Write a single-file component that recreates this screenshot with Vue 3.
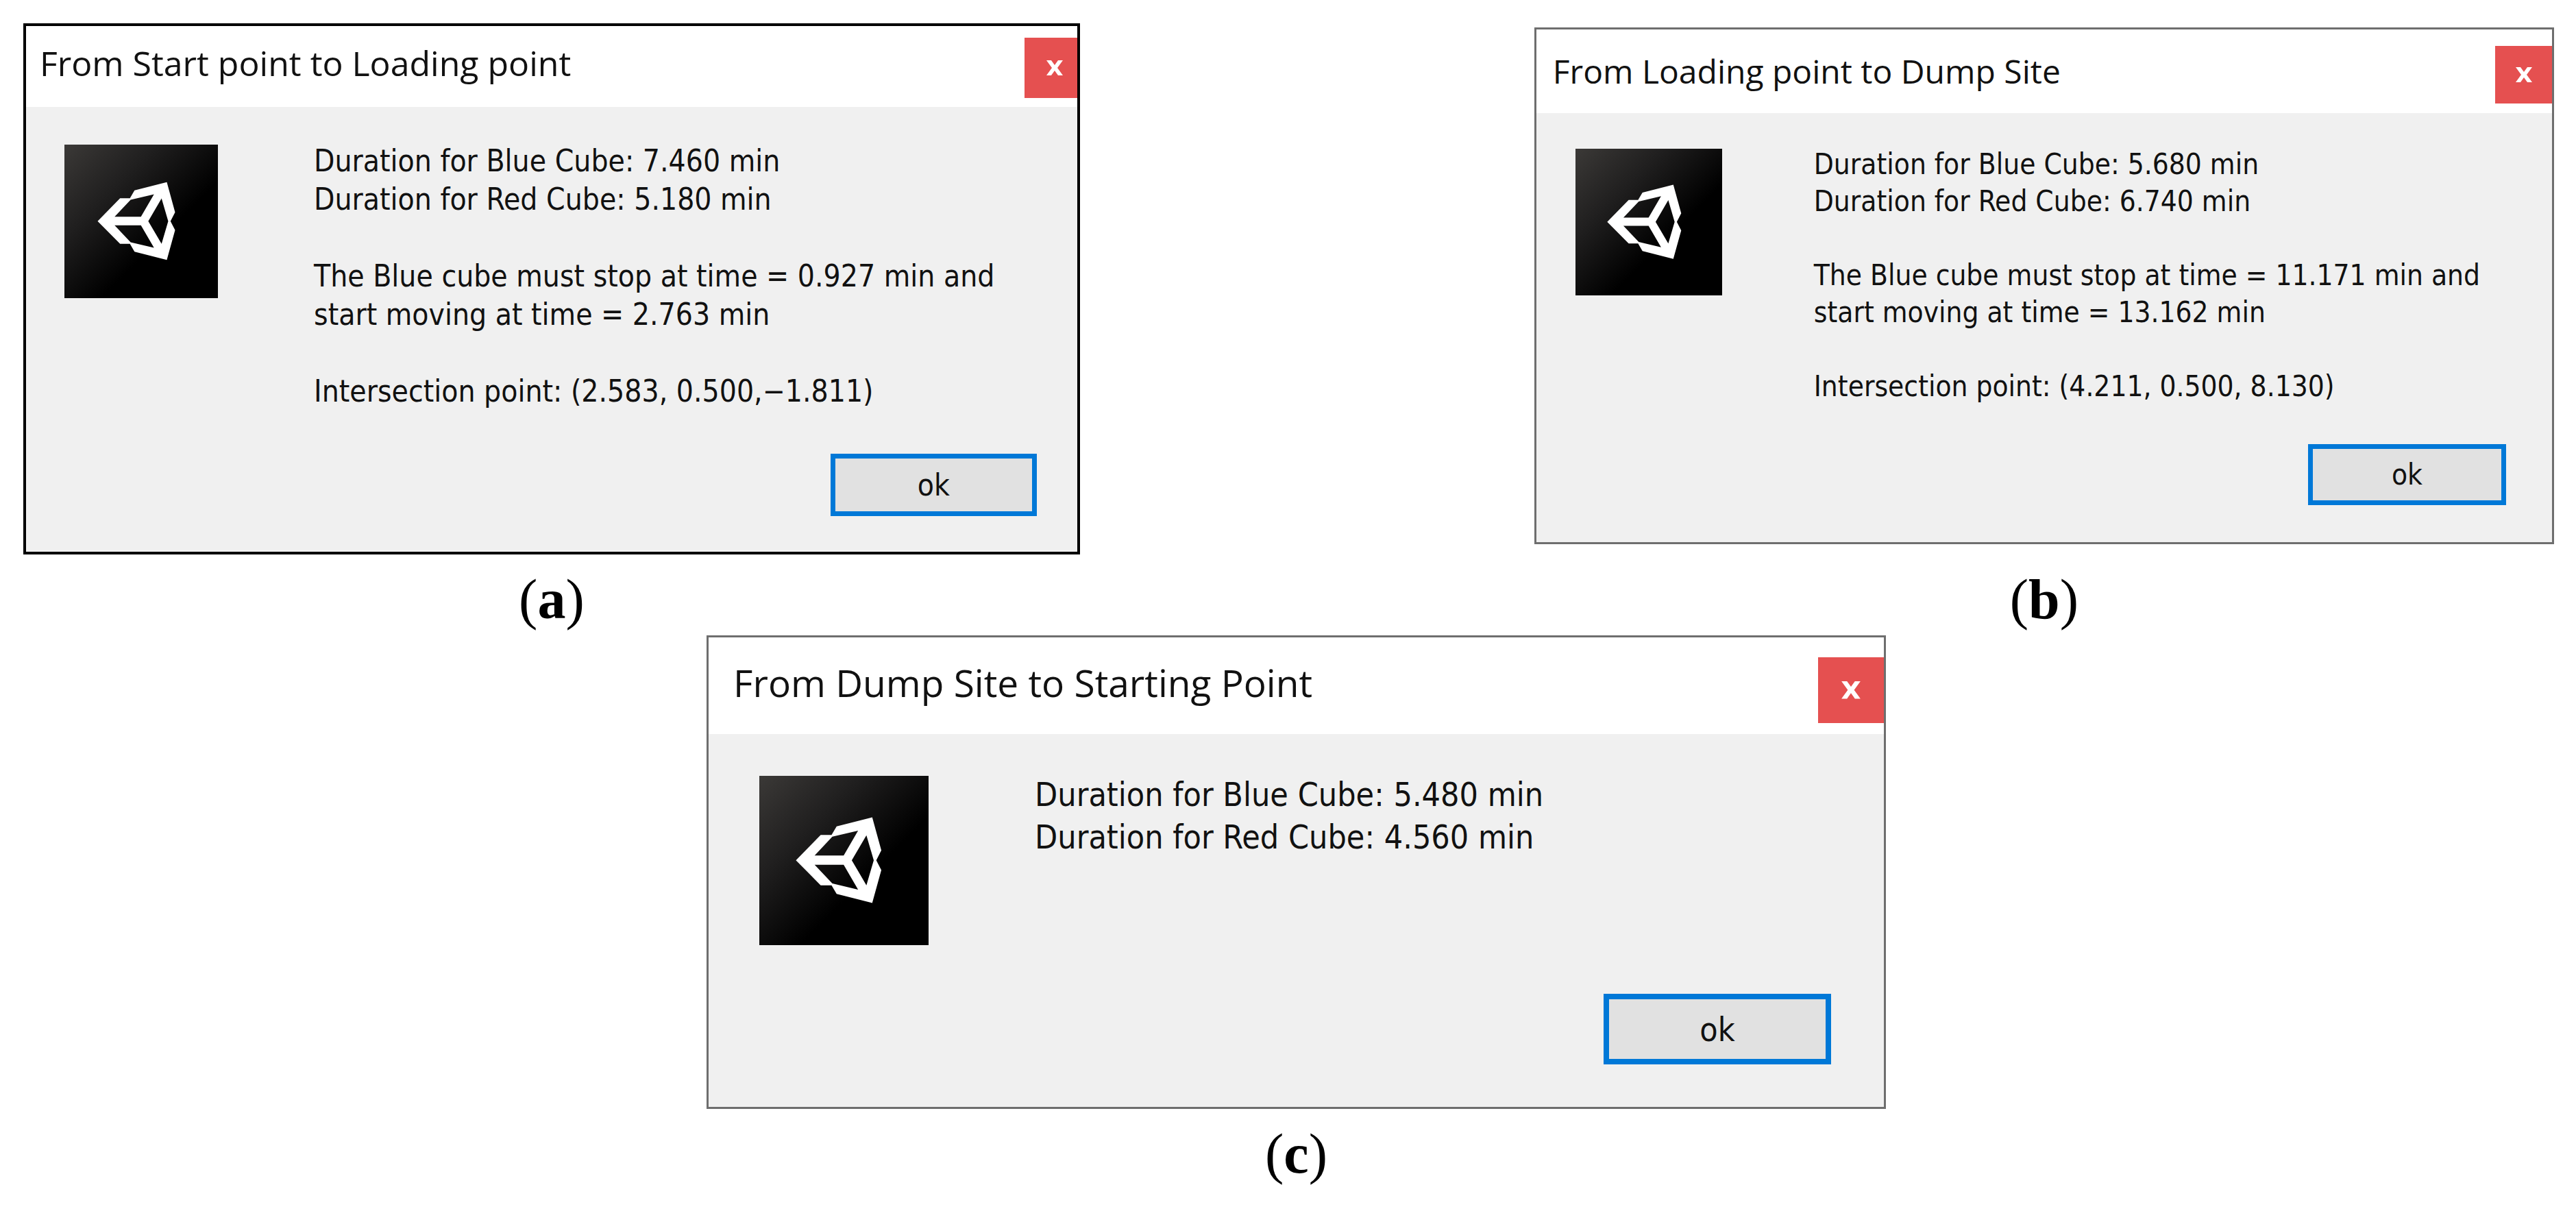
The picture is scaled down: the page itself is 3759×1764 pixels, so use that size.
<template>
  <main class="page">
    <figure v-for="item in dialogs" :key="item.id" class="figure" :class="`figure-${item.id}`">
      <section class="dialog" role="dialog" :aria-labelledby="`title-${item.id}`">
        <header class="titlebar">
          <h2 :id="`title-${item.id}`" class="title">{{ item.title }}</h2>
          <button class="close" type="button" aria-label="Close">
            <svg viewBox="0 0 26 22" aria-hidden="true">
              <path d="M1 0h7l5 7 5-7h7l-8 11 8 11h-7l-5-7-5 7H1l8-11z" />
            </svg>
          </button>
        </header>

        <div class="content">
          <svg class="logo" viewBox="0 0 670 670" aria-hidden="true">
            <defs>
              <linearGradient :id="`shade-${item.id}`" x1="0" y1="0" x2="1" y2="1">
                <stop offset="0" stop-color="#3b3937" />
                <stop offset="0.3" stop-color="#201f1f" />
                <stop offset="0.62" stop-color="#000" />
              </linearGradient>
            </defs>
            <rect width="670" height="670" :fill="`url(#shade-${item.id})`" />
            <path
              fill="#fff"
              fill-rule="evenodd"
              d="M145 334 243 234H286L306 200 447 164 483 295 463 334 483 373 447 503 306 467 286 433H243Z
                 M219 315H334L391 217 289 241Z
                 M219 352 289 426 391 450 334 352Z
                 M366 334 424 433 453 334 424 235Z"
            />
          </svg>
          <div class="message">
            <p v-for="text in item.message" :key="text">{{ text }}</p>
          </div>
        </div>

        <footer class="actions">
          <button class="ok" type="button">ok</button>
        </footer>
      </section>
      <figcaption class="caption">(<b>{{ item.id }}</b>)</figcaption>
    </figure>
  </main>
</template>

<script setup>
const dialogs = [
  {
    id: "a",
    title: "From Start point to Loading point",
    message: [
      "Duration for Blue Cube: 7.460 min\nDuration for Red Cube: 5.180 min",
      "The Blue cube must stop at time = 0.927 min and\nstart moving at time = 2.763 min",
      "Intersection point: (2.583, 0.500,−1.811)",
    ],
  },
  {
    id: "b",
    title: "From Loading point to Dump Site",
    message: [
      "Duration for Blue Cube: 5.680 min\nDuration for Red Cube: 6.740 min",
      "The Blue cube must stop at time = 11.171 min and\nstart moving at time = 13.162 min",
      "Intersection point: (4.211, 0.500, 8.130)",
    ],
  },
  {
    id: "c",
    title: "From Dump Site to Starting Point",
    message: ["Duration for Blue Cube: 5.480 min\nDuration for Red Cube: 4.560 min"],
  },
];
</script>

<style>
body {
  background: #fff;
}
</style>

<style scoped>
.page {
  display: flex;
  flex-wrap: wrap;
  justify-content: space-between;
  row-gap: 6px;
  padding: 34px 32px 20px 34px;
  box-sizing: border-box;
}

.figure {
  display: flex;
  flex-direction: column;
  justify-content: space-between;
  gap: 20px;
  margin: 0;
}

/* each window keeps its own zoom level */
.figure-a {
  --border: 4px solid #000;
  --title-size: 50px;
  --title-pad: 20px;
  --bar: 118px;
  --close-top: 17px;
  --close-w: 77px;
  --close-h: 88px;
  --close-pad: 12px;
  --cross: 26px;
  --logo: 224px;
  --left: 56px;
  --gap: 140px;
  --top: 51px;
  --text: 44px;
  --line: 56px;
  --actions-gap: 63px;
  --actions-right: 59px;
  --bottom: 52px;
  --ok-w: 301px;
  --ok-h: 91px;
  --ok-border: 7px;
  width: 41.75%;
}

.figure-b {
  --border: 3px solid #6e6e6e;
  --title-size: 48px;
  --title-pad: 24px;
  --bar: 122px;
  --close-top: 24px;
  --close-w: 83px;
  --close-h: 84px;
  --close-pad: 0;
  --cross: 26px;
  --logo: 214px;
  --left: 57px;
  --gap: 134px;
  --top: 48px;
  --text: 42px;
  --line: 54px;
  --actions-gap: 57px;
  --actions-right: 67px;
  --bottom: 54px;
  --ok-w: 289px;
  --ok-h: 89px;
  --ok-border: 7px;
  width: 40.3%;
  padding-top: 6px;
}

.figure-c {
  --border: 3px solid #6e6e6e;
  --title-size: 55px;
  --title-pad: 36px;
  --bar: 141px;
  --close-top: 29px;
  --close-w: 96px;
  --close-h: 96px;
  --close-pad: 0;
  --cross: 30px;
  --logo: 247px;
  --left: 74px;
  --gap: 155px;
  --top: 57px;
  --text: 48px;
  --line: 62px;
  --actions-gap: 71px;
  --actions-right: 77px;
  --bottom: 62px;
  --ok-w: 332px;
  --ok-h: 103px;
  --ok-border: 8px;
  width: 46.6%;
  margin-inline: auto;
  padding-left: 22px;
}

.dialog {
  border: var(--border);
  background: #f0f0f0;
  color: #111;
  font-family: "DejaVu Sans Condensed", "DejaVu Sans", sans-serif;
  font-size: var(--text);
  line-height: var(--line);
}

.titlebar {
  display: flex;
  justify-content: space-between;
  align-items: flex-start;
  height: var(--bar);
  padding-top: var(--close-top);
  padding-left: var(--title-pad);
  box-sizing: border-box;
  background: #fff;
}

.title {
  margin: 0;
  font-family: "Open Sans", "Noto Sans", sans-serif;
  font-size: var(--title-size);
  font-weight: 400;
  line-height: 74px;
}

.close {
  display: flex;
  justify-content: center;
  align-items: center;
  width: var(--close-w);
  height: var(--close-h);
  padding: 0 0 0 var(--close-pad);
  border: none;
  background: #e55050;
}

.close svg {
  width: var(--cross);
  fill: #fff;
}

.content {
  display: flex;
  align-items: flex-start;
  gap: var(--gap);
  padding: var(--top) 0 0 var(--left);
}

.logo {
  flex: none;
  width: var(--logo);
  height: var(--logo);
  margin-top: 4px;
}

.message p {
  margin: 0;
  white-space: pre-line;
}

.message p + p {
  margin-top: var(--line);
}

.actions {
  display: flex;
  justify-content: flex-end;
  padding: var(--actions-gap) var(--actions-right) var(--bottom) 0;
}

.ok {
  width: var(--ok-w);
  height: var(--ok-h);
  padding: 0;
  border: var(--ok-border) solid #0078d7;
  background: #e1e1e1;
  color: inherit;
  font: inherit;
}

.caption {
  color: #000;
  font-family: "Liberation Serif", serif;
  font-size: 82px;
  line-height: 92px;
  text-align: center;
}
</style>
